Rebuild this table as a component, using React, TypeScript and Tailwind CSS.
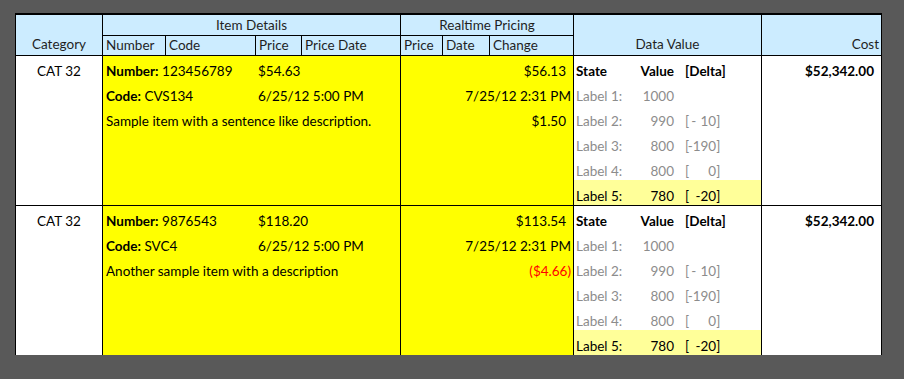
import React from 'react';

type DeltaRow = { label: string; value: string; delta?: React.ReactNode; highlight?: boolean };

interface Item {
  category: string;
  number: string;
  code: string;
  price: string;
  priceDate: string;
  description: string;
  rtPrice: string;
  rtDate: string;
  change: string;
  negative?: boolean;
  cost: string;
}

const items: Item[] = [
  {
    category: 'CAT 32',
    number: '123456789',
    code: 'CVS134',
    price: '$54.63',
    priceDate: '6/25/12 5:00 PM',
    description: 'Sample item with a sentence like description.',
    rtPrice: '$56.13',
    rtDate: '7/25/12 2:31 PM',
    change: '$1.50',
    cost: '$52,342.00',
  },
  {
    category: 'CAT 32',
    number: '9876543',
    code: 'SVC4',
    price: '$118.20',
    priceDate: '6/25/12 5:00 PM',
    description: 'Another sample item with a description',
    rtPrice: '$113.54',
    rtDate: '7/25/12 2:31 PM',
    change: '($4.66)',
    negative: true,
    cost: '$52,342.00',
  },
];

function Delta({ children }: { children: React.ReactNode }) {
  return (
    <span className="flex">
      <span>[</span>
      <span className="flex w-[27px] justify-end">{children}</span>
      <span>]</span>
    </span>
  );
}

const dataRows: DeltaRow[] = [
  { label: 'Label 1:', value: '1000' },
  {
    label: 'Label 2:',
    value: '990',
    delta: (
      <span className="flex w-full justify-between pl-[2px]">
        <span>-</span>
        <span>10</span>
      </span>
    ),
  },
  { label: 'Label 3:', value: '800', delta: '-190' },
  { label: 'Label 4:', value: '800', delta: '0' },
  { label: 'Label 5:', value: '780', delta: '-20', highlight: true },
];

// one 25px sub-row of a data cell; the first is 24px because the border eats a pixel
function Line({ first, className = '', children }: { first?: boolean; className?: string; children?: React.ReactNode }) {
  return (
    <div className={`flex items-end pb-[1px] leading-[16px] ${first ? 'h-[24px]' : 'h-[25px]'} ${className}`}>
      {children}
    </div>
  );
}

function ItemRow({ item }: { item: Item }) {
  return (
    <>
      <div className="border-r border-b border-black bg-white">
        <Line first className="justify-center">{item.category}</Line>
      </div>
      <div className="col-span-4 border-r border-b border-black bg-[#ffff00] pl-[3px]">
        <Line first>
          <span className="w-[152px]">
            <b>Number:</b> {item.number}
          </span>
          <span>{item.price}</span>
        </Line>
        <Line>
          <span className="w-[152px]">
            <b>Code:</b> {item.code}
          </span>
          <span>{item.priceDate}</span>
        </Line>
        <Line>{item.description}</Line>
      </div>
      <div className="col-span-3 border-r border-b border-black bg-[#ffff00]">
        <Line first className="justify-end pr-[7px]">{item.rtPrice}</Line>
        <Line className="justify-end pr-[2px]">{item.rtDate}</Line>
        <Line className={`justify-end ${item.negative ? 'pr-[2px] text-[#ff0000]' : 'pr-[7px]'}`}>{item.change}</Line>
      </div>
      <div className="border-r border-b border-black bg-white">
        <Line first className="pl-[2px] font-bold">
          <span className="w-[61px]">State</span>
          <span className="w-[37px] text-right">Value</span>
          <span className="ml-[11px]">[Delta]</span>
        </Line>
        {dataRows.map((r) => (
          <Line key={r.label} className={`pl-[2px] ${r.highlight ? 'bg-[#ffff99] text-black' : 'text-[#8c8c8c]'}`}>
            <span className="w-[61px]">{r.label}</span>
            <span className="w-[37px] text-right">{r.value}</span>
            <span className="ml-[11px]">{r.delta !== undefined && <Delta>{r.delta}</Delta>}</span>
          </Line>
        ))}
      </div>
      <div className="border-b border-black bg-white">
        <Line first className="justify-end pr-[7px] font-bold">{item.cost}</Line>
      </div>
    </>
  );
}

export default function App() {
  const head = 'border-r border-b border-black bg-[#ccecff]';
  return (
    <div
      className="h-[379px] w-[904px] overflow-hidden bg-[#595959] pt-[13px] pl-[15px] text-[13.5px] text-black"
      style={{ fontFamily: 'Lato, "Open Sans", sans-serif' }}
    >
      <div className="grid h-[342px] w-[867px] grid-cols-[87px_63px_90px_46px_99px_42px_47px_84px_188px_119px] grid-rows-[21px_20px_150px_150px] overflow-hidden border-t-2 border-r border-l border-black">
        <div className={`${head} row-span-2 flex items-end justify-center pb-[1px] text-[#1f1f1f]`}>Category</div>
        <div className={`${head} col-span-4 flex items-center justify-center text-[#1f1f1f]`}>Item Details</div>
        <div className={`${head} col-span-3 flex items-center justify-center text-[#1f1f1f]`}>Realtime Pricing</div>
        <div className={`${head} row-span-2 flex items-end justify-center pb-[1px] text-[#1f1f1f]`}>Data Value</div>
        <div className="row-span-2 flex items-end justify-end border-b border-black bg-[#ccecff] pr-[2px] pb-[1px] text-[#1f1f1f]">
          Cost
        </div>
        {['Number', 'Code', 'Price', 'Price Date', 'Price', 'Date', 'Change'].map((h, i) => (
          <div key={i} className={`${head} flex items-center pl-[3px] text-[#1f1f1f]`}>
            {h}
          </div>
        ))}
        {items.map((item, i) => (
          <ItemRow key={i} item={item} />
        ))}
      </div>
    </div>
  );
}
